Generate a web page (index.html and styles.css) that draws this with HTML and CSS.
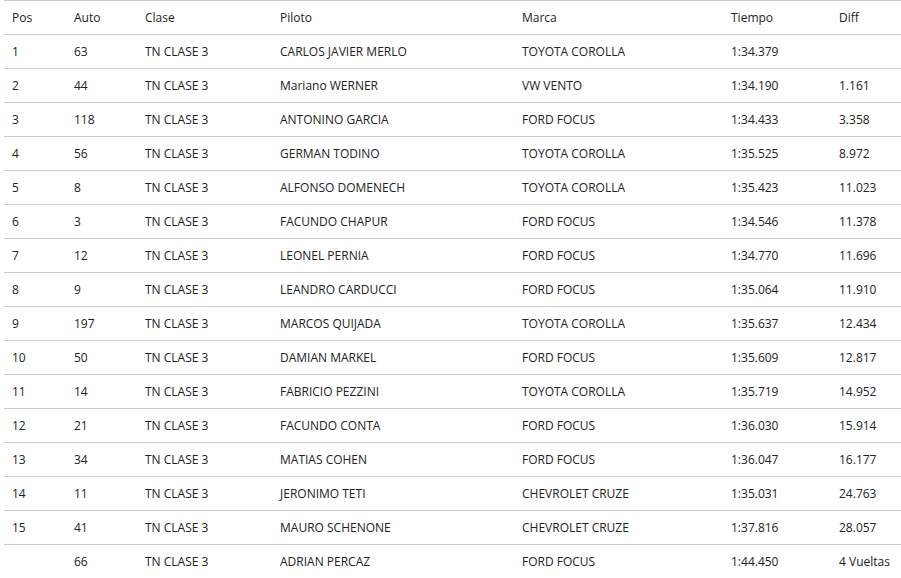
FILE: index.html
```html
<!DOCTYPE html>
<html lang="es">
<head>
<meta charset="utf-8">
<title>Resultados</title>
<link rel="stylesheet" href="styles.css">
</head>
<body>
<div class="wrap">
<table class="results">
<colgroup>
<col class="c-pos"><col class="c-auto"><col class="c-clase"><col class="c-piloto"><col class="c-marca"><col class="c-tiempo"><col class="c-diff">
</colgroup>
<thead>
<tr><th>Pos</th><th>Auto</th><th>Clase</th><th>Piloto</th><th>Marca</th><th>Tiempo</th><th>Diff</th></tr>
</thead>
<tbody>
<tr><td>1</td><td>63</td><td>TN CLASE 3</td><td>CARLOS JAVIER MERLO</td><td>TOYOTA COROLLA</td><td>1:34.379</td><td></td></tr>
<tr><td>2</td><td>44</td><td>TN CLASE 3</td><td>Mariano WERNER</td><td>VW VENTO</td><td>1:34.190</td><td>1.161</td></tr>
<tr><td>3</td><td>118</td><td>TN CLASE 3</td><td>ANTONINO GARCIA</td><td>FORD FOCUS</td><td>1:34.433</td><td>3.358</td></tr>
<tr><td>4</td><td>56</td><td>TN CLASE 3</td><td>GERMAN TODINO</td><td>TOYOTA COROLLA</td><td>1:35.525</td><td>8.972</td></tr>
<tr><td>5</td><td>8</td><td>TN CLASE 3</td><td>ALFONSO DOMENECH</td><td>TOYOTA COROLLA</td><td>1:35.423</td><td>11.023</td></tr>
<tr><td>6</td><td>3</td><td>TN CLASE 3</td><td>FACUNDO CHAPUR</td><td>FORD FOCUS</td><td>1:34.546</td><td>11.378</td></tr>
<tr><td>7</td><td>12</td><td>TN CLASE 3</td><td>LEONEL PERNIA</td><td>FORD FOCUS</td><td>1:34.770</td><td>11.696</td></tr>
<tr><td>8</td><td>9</td><td>TN CLASE 3</td><td>LEANDRO CARDUCCI</td><td>FORD FOCUS</td><td>1:35.064</td><td>11.910</td></tr>
<tr><td>9</td><td>197</td><td>TN CLASE 3</td><td>MARCOS QUIJADA</td><td>TOYOTA COROLLA</td><td>1:35.637</td><td>12.434</td></tr>
<tr><td>10</td><td>50</td><td>TN CLASE 3</td><td>DAMIAN MARKEL</td><td>FORD FOCUS</td><td>1:35.609</td><td>12.817</td></tr>
<tr><td>11</td><td>14</td><td>TN CLASE 3</td><td>FABRICIO PEZZINI</td><td>TOYOTA COROLLA</td><td>1:35.719</td><td>14.952</td></tr>
<tr><td>12</td><td>21</td><td>TN CLASE 3</td><td>FACUNDO CONTA</td><td>FORD FOCUS</td><td>1:36.030</td><td>15.914</td></tr>
<tr><td>13</td><td>34</td><td>TN CLASE 3</td><td>MATIAS COHEN</td><td>FORD FOCUS</td><td>1:36.047</td><td>16.177</td></tr>
<tr><td>14</td><td>11</td><td>TN CLASE 3</td><td>JERONIMO TETI</td><td>CHEVROLET CRUZE</td><td>1:35.031</td><td>24.763</td></tr>
<tr><td>15</td><td>41</td><td>TN CLASE 3</td><td>MAURO SCHENONE</td><td>CHEVROLET CRUZE</td><td>1:37.816</td><td>28.057</td></tr>
<tr><td></td><td>66</td><td>TN CLASE 3</td><td>ADRIAN PERCAZ</td><td>FORD FOCUS</td><td>1:44.450</td><td>4 Vueltas</td></tr>
</tbody>
</table>
</div>
</body>
</html>
```

FILE: styles.css
```css
html, body {
  margin: 0;
  padding: 0;
  background: #fff;
}
.wrap {
  padding-left: 4px;
}
.results {
  border-collapse: collapse;
  table-layout: fixed;
  width: 905px;
  font-family: "Open Sans", "Liberation Sans", sans-serif;
  font-size: 12px;
  color: #222;
}
.c-pos { width: 62px; }
.c-auto { width: 71px; }
.c-clase { width: 135px; }
.c-piloto { width: 242px; }
.c-marca { width: 209px; }
.c-tiempo { width: 108px; }
.c-diff { width: 78px; }
.results th,
.results td {
  height: 34px;
  padding: 0 8px;
  text-align: left;
  font-weight: normal;
  border-top: 1px solid #ccc;
  vertical-align: middle;
  white-space: nowrap;
  box-sizing: border-box;
}
```
